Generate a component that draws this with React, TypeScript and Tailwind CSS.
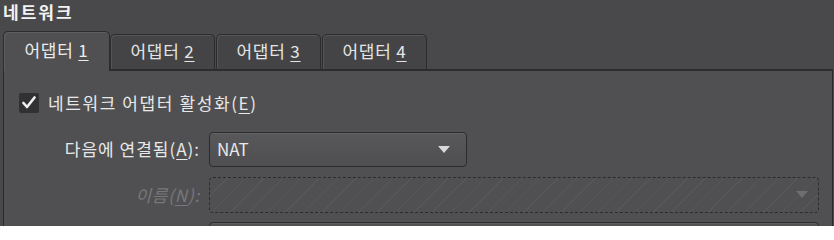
import React from 'react';

const FONT = { fontFamily: '"Noto Sans CJK KR", "Noto Sans", sans-serif' };

// 밑줄 단축키 문자
const U = ({ children }: { children: React.ReactNode }) => (
  <span className="underline underline-offset-[3px] decoration-1">{children}</span>
);

const Tab = ({ label, num, active }: { label: string; num: string; active?: boolean }) =>
  active ? (
    <div className="relative z-10 -mb-[2px] flex h-[40px] w-[107px] items-start justify-center rounded-t-[5px] border border-b-0 border-[#2c2c2e] bg-[#505052] pt-[5px] text-[17px] tracking-[0.8px] text-[#ececec] shadow-[inset_1px_1px_0_#5e5e60]">
      {label}&nbsp;<U>{num}</U>
    </div>
  ) : (
    <div className="mr-[1px] flex h-[35px] w-[105px] items-start justify-center rounded-t-[5px] border border-b-0 border-[#2c2c2e] bg-[#444446] pt-[3px] text-[17px] tracking-[0.8px] text-[#e4e4e4] shadow-[inset_1px_1px_0_#555557]">
      {label}&nbsp;<U>{num}</U>
    </div>
  );

const Arrow = ({ color }: { color: string }) => (
  <svg width="12" height="7" viewBox="0 0 12 7">
    <path d="M0 0 H12 L6 7 Z" fill={color} />
  </svg>
);

export default function App() {
  return (
    <div className="h-[226px] w-[834px] overflow-hidden bg-[#49494b] text-[#e8e8e8]" style={FONT}>
      {/* 제목 */}
      <div className="h-[32px] pl-[3px] pt-[1px] text-[17px] font-bold leading-[22px] tracking-[2px] text-[#f2f2f2]">네트워크</div>

      {/* 탭 */}
      <div className="flex h-[37px] items-end pl-[3px]">
        <Tab label="어댑터" num="1" active />
        <Tab label="어댑터" num="2" />
        <Tab label="어댑터" num="3" />
        <Tab label="어댑터" num="4" />
      </div>

      {/* 패널 */}
      <div className="ml-[3px] mr-[1px] h-[160px] border-x border-t-2 border-[#2c2c2e] bg-[#505052] pt-[19px]">
        <div className="flex items-center pl-[15px]">
          <div className="flex h-[20px] w-[20px] items-center justify-center rounded-[2px] bg-[#313133]">
            <svg width="14" height="13" viewBox="0 0 14 13">
              <path d="M1.5 7 L5 11 L12.5 1.5" stroke="#f0f0f0" strokeWidth="2.6" fill="none" strokeLinecap="round" strokeLinejoin="round" />
            </svg>
          </div>
          <span className="ml-[9px] text-[17px] tracking-[1.6px]">
            네트워크 어댑터 활성화(<U>E</U>)
          </span>
        </div>

        <div className="mt-[16px] flex items-center">
          <div className="w-[196px] text-right text-[17px] tracking-[1px]">
            다음에 연결됨(<U>A</U>):
          </div>
          <div className="ml-[9px] flex h-[35px] w-[258px] items-center justify-between rounded-[4px] border border-[#2c2c2e] bg-gradient-to-b from-[#58585a] to-[#4f4f51] pl-[7px] pr-[16px] text-[17px] shadow-[inset_0_1px_0_#626264]">
            <span>NAT</span>
            <Arrow color="#d8d8d8" />
          </div>
        </div>

        <div className="mt-[10px] flex items-center">
          <div className="w-[196px] text-right text-[17px] italic tracking-[0.8px] text-[#77777a]">
            이름(<U>N</U>):
          </div>
          <div className="ml-[9px] flex h-[36px] w-[610px] items-center justify-end rounded-[4px] border border-dashed border-[#2c2c2e] bg-[repeating-linear-gradient(135deg,#505052_0px,#505052_12px,#575759_12px,#575759_13px)] pr-[10px]">
            <Arrow color="#6e6e70" />
          </div>
        </div>

        <div className="mt-[9px] flex">
          <div className="ml-[205px] h-[30px] w-[610px] rounded-[4px] border border-[#2c2c2e] bg-[#525254] shadow-[inset_0_1px_0_#5e5e60]" />
        </div>
      </div>
    </div>
  );
}
